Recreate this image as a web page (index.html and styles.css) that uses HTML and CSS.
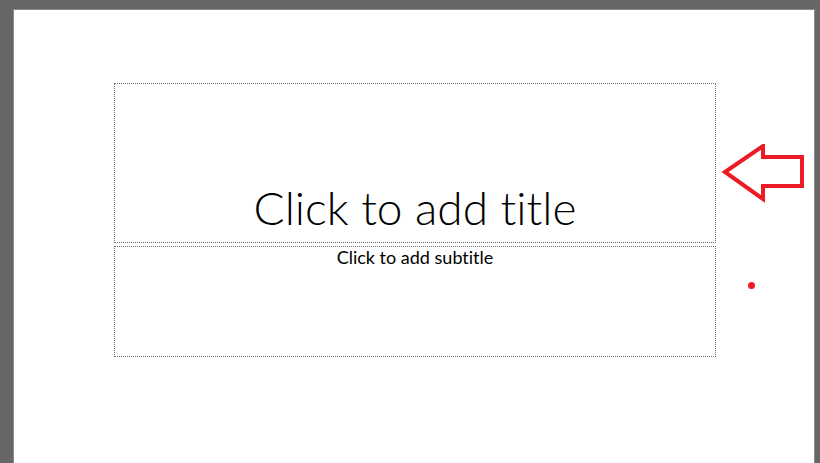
FILE: index.html
```html
<!DOCTYPE html>
<html lang="en">
  <head>
    <meta charset="UTF-8" />
    <title>Slide</title>
    <link rel="stylesheet" href="styles.css">
  </head>
  <body>
    <main class="workspace">
      <section class="slide" aria-label="Slide 1">
        <div class="placeholder title-box">
          <h1 class="title-text">Click to add title</h1>
        </div>
        <div class="placeholder subtitle-box">
          <p class="subtitle-text">Click to add subtitle</p>
        </div>

        <!-- hand drawn annotations -->
        <svg class="arrow" width="90" height="64" viewBox="0 0 90 64" aria-hidden="true">
          <polygon points="4,28 42,2 42,13 81,13 81,42 42,42 42,55"
            fill="none" stroke="#ed1c24" stroke-width="4" stroke-linejoin="miter" />
        </svg>
        <span class="dot" aria-hidden="true"></span>
      </section>
    </main>
  </body>
</html>
```

FILE: styles.css
```css
* {
  box-sizing: border-box;
}
html,
body {
  margin: 0;
  padding: 0;
  height: 100%;
  overflow: hidden;
}
body {
  background: #666666;
  font-family: Lato, "Open Sans", "Liberation Sans", sans-serif;
  font-variant-ligatures: none;
}
.workspace {
  padding: 9px 0 0 13px;
}

/* Slide canvas */
.slide {
  position: relative;
  width: 802px;
  height: 454px;
  background: #fff;
  border: 1px solid #8a8a8a;
  border-bottom: none;
  padding: 73px 0 0 100px;
}

/* Placeholders */
.placeholder {
  width: 602px;
  border: 1px dotted #6e6e6e;
  display: flex;
  justify-content: center;
}
.title-box {
  height: 160px;
  align-items: flex-end;
  margin-bottom: 3px;
}
.subtitle-box {
  height: 111px;
  align-items: flex-start;
}
.title-text {
  margin: 0 0 7px;
  font-weight: 300;
  font-size: 46px;
  line-height: 1.2;
  color: #000;
}
.subtitle-text {
  margin: 0;
  font-weight: 400;
  font-size: 18px;
  line-height: 1.2;
  color: #000;
}

/* Annotations */
.arrow {
  position: absolute;
  left: 707px;
  top: 134px;
}
.dot {
  position: absolute;
  left: 734px;
  top: 272px;
  width: 7px;
  height: 7px;
  border-radius: 50%;
  background: #ed1c24;
}
```
